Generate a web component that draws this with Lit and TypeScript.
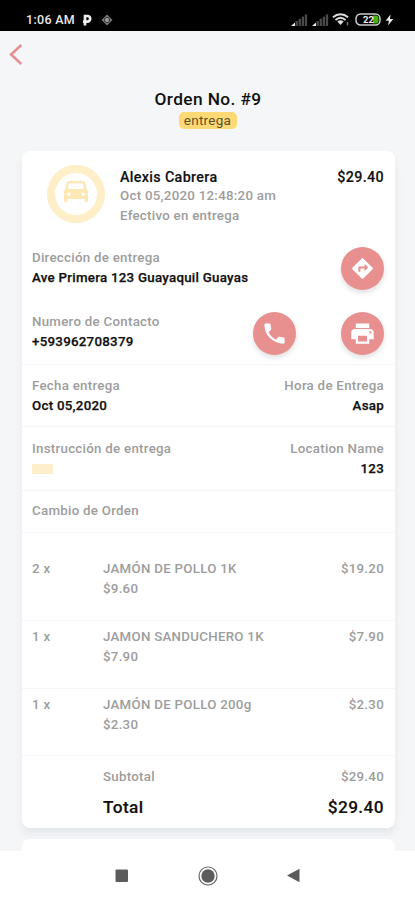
import { LitElement, html, css, svg } from "lit";
import { customElement } from "lit/decorators.js";

interface Item {
  qty: string;
  name: string;
  unit: string;
  total: string;
}

const ITEMS: Item[] = [
  { qty: "2 x", name: "JAMÓN DE POLLO 1K", unit: "$9.60", total: "$19.20" },
  { qty: "1 x", name: "JAMON SANDUCHERO 1K", unit: "$7.90", total: "$7.90" },
  { qty: "1 x", name: "JAMÓN DE POLLO 200g", unit: "$2.30", total: "$2.30" },
];

const signal = html`<svg class="signal" width="17" height="12" viewBox="0 0 17 12">
  <path d="M0 12 4 8.500V12z" fill="#eee" />
  ${[0, 1, 2, 3].map(
    (i) => svg`<rect x=${4.5 + i * 3.1} y=${7 - i * 2.2} width="2.3" height=${5 + i * 2.2} fill="#4a4a4a" />`
  )}
</svg>`;

@customElement("app-root")
export class AppRoot extends LitElement {
  static styles = css`
    :host {
      display: flex;
      flex-direction: column;
      width: 415px;
      height: 900px;
      overflow: hidden;
      box-sizing: border-box;
      background: #f4f6f8;
      font-family: Roboto, "Liberation Sans", sans-serif;
      font-size: 13.3px;
      line-height: 20px;
      letter-spacing: 0.27px;
      font-weight: 500;
      color: #9d9d9d;
    }
    * { box-sizing: border-box; }
    svg { display: block; flex: none; }
    .status {
      flex: none;
      height: 31px;
      background: #000;
      color: #e8e8e8;
      display: flex;
      align-items: center;
      padding: 8px 21px 0 26px;
      font-size: 12.5px;
      letter-spacing: 0.3px;
      line-height: 16px;
    }
    .park { margin-left: 7px; }
    .dot { margin-left: 9px; }
    .right { margin-left: auto; display: flex; align-items: center; }
    .signal { margin-right: 4px; }
    .wifi { margin-left: -1px; }
    .battery { margin-left: 5px; }
    .bolt { margin-left: 4px; }
    .content {
      flex: none;
      height: 820px;
      overflow: hidden;
      display: flex;
      flex-direction: column;
    }
    .back { padding: 13px 0 0 9px; height: 57px; flex: none; }
    .head { display: flex; flex-direction: column; align-items: center; height: 63px; flex: none; }
    .title { font-size: 17.3px; line-height: 22px; color: #111; letter-spacing: 0.4px; margin-left: 1px; }
    .tag {
      margin-top: 2px;
      height: 17px;
      line-height: 17px;
      width: 58px;
      text-align: center;
      border-radius: 5px;
      background: #fed975;
      color: #5d5130;
      font-weight: 400;
      font-size: 13.5px;
    }
    .card {
      flex: none;
      margin: 0 20px 0 22px;
      height: 677px;
      background: #fff;
      border-radius: 8px;
      box-shadow: 0 6px 8px -1px rgba(90, 95, 105, 0.1);
    }
    .next { height: 60px; margin-top: 11px; box-shadow: none; }
    .row { display: flex; justify-content: space-between; padding: 11px 11px 0 10px; }
    .line { border-bottom: 1px solid #f5f6f7; }
    .strong { color: #111; font-weight: 500; -webkit-text-stroke: 0.25px #111; }
    .big { font-size: 14.3px; letter-spacing: 0.34px; padding-top: 1px; margin-bottom: -1px; -webkit-text-stroke: 0.15px #111; }
    .end { text-align: right; }
    .summary { height: 86px; padding-top: 15px; }
    .address { height: 63px; padding-top: 11px; }
    .contact { height: 65px; padding-top: 12px; }
    .wide { height: 62px; }
    .place { height: 64px; padding-top: 12px; }
    .change { height: 42px; padding-top: 10px; }
    .who { flex: 1; }
    .avatar {
      width: 58px;
      height: 58px;
      margin: -1px 15px 0 15px;
      border: 8px solid #feefc8;
      border-radius: 50%;
      display: flex;
      align-items: center;
      justify-content: center;
    }
    .avatar svg { margin-top: -5px; }
    .round {
      width: 43px;
      height: 43px;
      border-radius: 50%;
      background: #e88f8f;
      display: flex;
      align-items: center;
      justify-content: center;
      box-shadow: 0 3px 5px rgba(80, 70, 70, 0.16);
    }
    .actions { display: flex; gap: 45px; }
    .address .round { margin-top: -1px; }
    .patch { width: 21px; height: 10px; background: #feefcc; margin-top: 5px; }
    .item { height: 68px; padding-top: 6px; }
    .item:nth-of-type(7) { height: 88px; padding-top: 26px; }
    .item.last { height: 67px; }
    .qty { width: 71px; }
    .desc { flex: 1; }
    .sub { padding-top: 11px; }
    .total { padding-top: 9px; font-size: 17.3px; line-height: 22px; letter-spacing: 0.4px; color: #111; -webkit-text-stroke: 0.15px #111; }
    .nav {
      flex: none;
      height: 49px;
      background: #fff;
      display: flex;
      align-items: center;
      padding-left: 115px;
    }
    .circle { margin-left: 69px; }
    .tri { margin-left: 69px; }
  `;

  private item(it: Item, last: boolean) {
    return html`<div class="row line item ${last ? "last" : ""}">
      <div class="qty">${it.qty}</div>
      <div class="desc">${it.name}<br />${it.unit}</div>
      <div>${it.total}</div>
    </div>`;
  }

  render() {
    return html`
      <div class="status">
        <span>1:06 AM</span>
        <svg class="park" width="10" height="12" viewBox="0 0 10 12">
          <path d="M3 11.5V2H5.4A2.7 2.7 0 0 1 5.4 7.6H1" fill="none" stroke="#eee" stroke-width="2.7" />
        </svg>
        <svg class="dot" width="12" height="12" viewBox="0 0 12 12">
          <path d="M6 .5 11.5 6 6 11.5.5 6z" fill="#777" />
          <circle cx="6" cy="6" r="2.6" fill="#999" stroke="#333" />
        </svg>
        <div class="right">
          ${signal}${signal}
          <svg class="wifi" width="18" height="13" viewBox="0 0 18 13" fill="none" stroke="#ddd" stroke-width="2">
            <path d="M1 4.2C5.5.2 11.5.2 16 4.2M3.5 7C6.6 4.2 10.4 4.2 13.5 7" />
            <path d="M5.3 8.5Q8.5 5.8 11.7 8.5L8.5 12z" fill="#ddd" stroke="none" />
            <path d="M15.5 9v3.5" stroke="#777" stroke-width="1.5" />
          </svg>
          <svg class="battery" width="26" height="13" viewBox="0 0 26 13">
            <rect x="1" y="1" width="24" height="11" rx="4.5" fill="#000" stroke="#ccc" stroke-width="1.5" />
            <path d="M18 2.5h3a2.5 2.5 0 0 1 2.5 2.5v3a2.5 2.5 0 0 1-2.5 2.5h-3z" fill="#43b513" />
            <text x="8" y="10" font-size="9.5" font-weight="700" letter-spacing="0" fill="#eee">22</text>
          </svg>
          <svg class="bolt" width="9" height="12" viewBox="0 0 9 12">
            <path d="M5.5.5.7 6.7H4L3 11.5 8.3 5H5z" fill="#eee" />
          </svg>
        </div>
      </div>
      <div class="content">
        <div class="back">
          <svg width="14" height="21" viewBox="0 0 14 21">
            <path d="M12.3 1 2 10.5 12.3 20" fill="none" stroke="#e88f8f" stroke-width="2.5" />
          </svg>
        </div>
        <div class="head">
          <div class="title">Orden No. #9</div>
          <div class="tag">entrega</div>
        </div>
        <div class="card">
          <div class="row summary">
            <div class="avatar">
              <svg width="24" height="21" viewBox="0 0 24 21">
                <path
                  fill="#fde8b4"
                  fill-rule="evenodd"
                  d="M5 0H19Q21 0 21.500 2L22.500 8Q24 8.500 24 10.500V20Q24 21 23 21H21.500Q20.500 21 20.500 20V18H3.500V20Q3.500 21 2.500 21H1Q0 21 0 20V10.500Q0 8.500 1.500 8L2.500 2Q3 0 5 0ZM6 2.300Q5 2.300 4.800 3.300L4 8H20L19.200 3.300Q19 2.300 18 2.300ZM3 13.200A1.800 1.800 0 1 0 6.600 13.200A1.800 1.800 0 1 0 3 13.200ZM17.400 13.200A1.800 1.800 0 1 0 21 13.200A1.800 1.800 0 1 0 17.400 13.200Z"
                />
              </svg>
            </div>
            <div class="who">
              <div class="strong big">Alexis Cabrera</div>
              <div>Oct 05,2020 12:48:20 am</div>
              <div>Efectivo en entrega</div>
            </div>
            <div class="strong big">$29.40</div>
          </div>
          <div class="row address">
            <div>
              <div>Dirección de entrega</div>
              <div class="strong">Ave Primera 123 Guayaquil Guayas</div>
            </div>
            <div class="round">
              <svg width="25" height="25" viewBox="0 0 24 24" fill="#fff">
                <path d="M21.71 11.29l-9-9c-.39-.39-1.02-.39-1.41 0l-9 9c-.39.39-.39 1.02 0 1.41l9 9c.39.39 1.02.39 1.41 0l9-9c.39-.38.39-1.01 0-1.41zM14 14.5V12h-4v3H8v-4c0-.55.45-1 1-1h5V7.5l3.5 3.5-3.5 3.5z" />
              </svg>
            </div>
          </div>
          <div class="row line contact">
            <div>
              <div>Numero de Contacto</div>
              <div class="strong">+593962708379</div>
            </div>
            <div class="actions">
              <div class="round">
                <svg width="27" height="27" viewBox="0 0 24 24" fill="#fff">
                  <path d="M6.62 10.79c1.44 2.83 3.76 5.14 6.59 6.59l2.2-2.2c.27-.27.67-.36 1.02-.24 1.12.37 2.33.57 3.57.57.55 0 1 .45 1 1V20c0 .55-.45 1-1 1-9.39 0-17-7.61-17-17 0-.55.45-1 1-1h3.5c.55 0 1 .45 1 1 0 1.25.2 2.45.57 3.57.11.35.03.74-.25 1.02l-2.2 2.2z" />
                </svg>
              </div>
              <div class="round">
                <svg width="27" height="27" viewBox="0 0 24 24" fill="#fff">
                  <path d="M19 8H5c-1.66 0-3 1.34-3 3v6h4v4h12v-4h4v-6c0-1.66-1.34-3-3-3zm-3 11H8v-5h8v5zm3-7c-.55 0-1-.45-1-1s.45-1 1-1 1 .45 1 1-.45 1-1 1zm-1-9H6v4h12V3z" />
                </svg>
              </div>
            </div>
          </div>
          <div class="row line wide">
            <div>
              <div>Fecha entrega</div>
              <div class="strong">Oct 05,2020</div>
            </div>
            <div class="end">
              <div>Hora de Entrega</div>
              <div class="strong">Asap</div>
            </div>
          </div>
          <div class="row line place">
            <div>
              <div>Instrucción de entrega</div>
              <div class="patch"></div>
            </div>
            <div class="end">
              <div>Location Name</div>
              <div class="strong">123</div>
            </div>
          </div>
          <div class="row line change">Cambio de Orden</div>
          ${ITEMS.map((it, i) => this.item(it, i === ITEMS.length - 1))}
          <div class="row sub">
            <div class="qty"></div>
            <div class="desc">Subtotal</div>
            <div>$29.40</div>
          </div>
          <div class="row total">
            <div class="qty"></div>
            <div class="desc">Total</div>
            <div>$29.40</div>
          </div>
        </div>
        <div class="card next"></div>
      </div>
      <div class="nav">
        <svg width="14" height="14" viewBox="0 0 14 14"><rect x="0.5" y="0.5" width="12.5" height="12.5" rx="1" fill="#5c5c5c" /></svg>
        <svg class="circle" width="20" height="20" viewBox="0 0 20 20">
          <circle cx="10" cy="10" r="9" fill="#fff" stroke="#666" stroke-width="1.2" />
          <circle cx="10" cy="10" r="6.7" fill="#5c5c5c" />
        </svg>
        <svg class="tri" width="13" height="15" viewBox="0 0 13 15"><path d="M12.5.8v13.4L0 7.5z" fill="#5c5c5c" /></svg>
      </div>
    `;
  }
}
